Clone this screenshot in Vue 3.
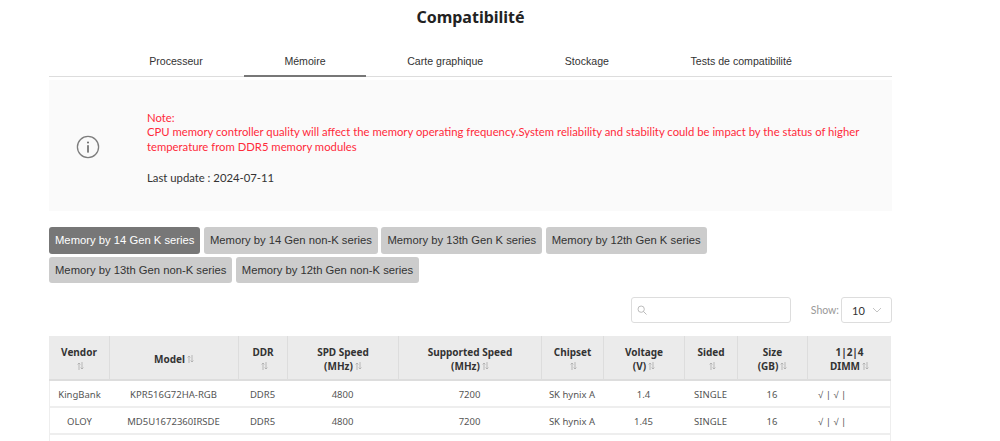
<script setup>
const TABS = ["Processeur", "Mémoire", "Carte graphique", "Stockage", "Tests de compatibilité"];

const SERIES = [
  "Memory by 14 Gen K series",
  "Memory by 14 Gen non-K series",
  "Memory by 13th Gen K series",
  "Memory by 12th Gen K series",
  "Memory by 13th Gen non-K series",
  "Memory by 12th Gen non-K series",
];

const COLUMNS = [
  { lines: ["Vendor"], width: 60, iconBelow: true },
  { lines: ["Model"], width: 129 },
  { lines: ["DDR"], width: 49, iconBelow: true },
  { lines: ["SPD Speed", "(MHz)"], width: 111 },
  { lines: ["Supported Speed", "(MHz)"], width: 143 },
  { lines: ["Chipset"], width: 62, iconBelow: true },
  { lines: ["Voltage", "(V)"], width: 81 },
  { lines: ["Sided"], width: 53, iconBelow: true },
  { lines: ["Size", "(GB)"], width: 70 },
  { lines: ["1|2|4", "DIMM"], width: 84 },
];

const ROWS = [
  ["KingBank", "KPR516G72HA-RGB", "DDR5", "4800", "7200", "SK hynix A", "1.4", "SINGLE", "16", "√ | √ |"],
  ["OLOY", "MD5U1672360IRSDE", "DDR5", "4800", "7200", "SK hynix A", "1.45", "SINGLE", "16", "√ | √ |"],
  ["", "", "", "", "", "", "", "", "", ""],
];
</script>

<template>
  <div class="page">
    <h1 class="title">Compatibilité</h1>

    <nav class="tabs">
      <a v-for="tab in TABS" :key="tab" class="tab" :class="{ active: tab === 'Mémoire' }">{{ tab }}</a>
    </nav>

    <section class="note">
      <div class="note-icon">
        <svg width="24" height="24" viewBox="0 0 24 24" fill="none">
          <circle cx="12" cy="12" r="10.6" stroke="#7d7d7d" stroke-width="1.3" />
          <circle cx="12" cy="7.6" r="1" fill="#666" />
          <rect x="11.2" y="10.2" width="1.6" height="7.4" fill="#666" />
        </svg>
      </div>
      <div class="note-text">
        <p class="warn">Note:<br />CPU memory controller quality will affect the memory operating frequency.System reliability and stability could be impact by the status of higher temperature from DDR5 memory modules</p>
        <p class="updated">Last update : 2024-07-11</p>
      </div>
    </section>

    <div class="series">
      <button
        v-for="(item, i) in SERIES"
        :key="item"
        type="button"
        class="series-btn"
        :class="{ active: i === 0 }"
      >
        {{ item }}
      </button>
    </div>

    <div class="controls">
      <div class="search">
        <svg width="10" height="10" viewBox="0 0 12 12" fill="none" stroke="#b5b5b5" stroke-width="1.1">
          <circle cx="5" cy="5" r="3.8" />
          <path d="M7.7 7.7L11.4 11.4" />
        </svg>
      </div>
      <span class="show-label">Show:</span>
      <div class="show-select">
        <span>10</span>
        <svg width="10" height="6" viewBox="0 0 10 6" fill="none" stroke="#c4c4c4" stroke-width="1">
          <path d="M1 1l4 4 4-4" />
        </svg>
      </div>
    </div>

    <table class="grid">
      <colgroup>
        <col v-for="col in COLUMNS" :key="col.lines[0]" :style="{ width: col.width + 'px' }" />
      </colgroup>
      <thead>
        <tr>
          <th v-for="col in COLUMNS" :key="col.lines[0]">
            <template v-for="(line, i) in col.lines" :key="line">
              <br v-if="i > 0" />{{ line }}
            </template>
            <br v-if="col.iconBelow" />
            <svg class="sort" width="7" height="8" viewBox="0 0 7 8" fill="none" stroke="#aaa" stroke-width="0.8">
              <path d="M2 8V1M0.6 2.4L2 1l1.4 1.4M5 0v7M3.6 5.6L5 7l1.4-1.4" />
            </svg>
          </th>
        </tr>
      </thead>
      <tbody>
        <tr v-for="(row, r) in ROWS" :key="r">
          <td v-for="(cell, c) in row" :key="c" :class="{ dimm: c === 9 }">{{ cell }}</td>
        </tr>
      </tbody>
    </table>
  </div>
</template>

<style>
body {
  background: #fff;
}
</style>

<style scoped>
.page {
  width: 843px;
  margin-left: 49px;
  font-family: Lato, "Noto Sans", sans-serif;
  font-size: 12px;
  color: #333;
}

.title {
  margin: 0;
  padding-top: 5px;
  height: 44px;
  box-sizing: border-box;
  font-family: "Noto Sans", sans-serif;
  font-size: 16px;
  line-height: 24px;
  font-weight: 700;
  text-align: center;
  color: #222;
}

.tabs {
  display: flex;
  justify-content: center;
  height: 33px;
  box-sizing: border-box;
  border-bottom: 1px solid #ddd;
  font-family: "Liberation Sans", Arial, sans-serif;
  font-size: 10.6px;
}

.tab {
  padding: 11px 40.8px 0;
  height: 33px;
  box-sizing: border-box;
  color: #333;
  white-space: nowrap;
}

.tab.active {
  border-bottom: 2px solid #777;
}

.note {
  display: flex;
  align-items: center;
  height: 131px;
  margin-top: 3px;
  background: #fafafa;
}

.note-icon {
  display: flex;
  justify-content: center;
  width: 98px;
  flex: none;
  padding: 3px 20px 0 0;
  box-sizing: border-box;
}

.note-text {
  width: 720px;
  padding-top: 5px;
  font-size: 11.3px;
  line-height: 14.6px;
}

.note-text p {
  margin: 0;
}

.warn {
  color: #ff2a3a;
}

.updated {
  margin-top: 16px !important;
  color: #333;
}

.series {
  display: flex;
  flex-wrap: wrap;
  gap: 3px 3.5px;
  width: 680px;
  margin-top: 16px;
}

.series-btn {
  height: 26.5px;
  padding: 0 6px;
  border: 0;
  border-radius: 3px;
  background: #ccc;
  color: #333;
  font-family: "Liberation Sans", Arial, sans-serif;
  font-size: 11.25px;
  white-space: nowrap;
}

.series-btn.active {
  background: #777;
  color: #fff;
}

.controls {
  display: flex;
  align-items: center;
  justify-content: flex-end;
  margin-top: 14px;
}

.search {
  display: flex;
  align-items: center;
  width: 160px;
  height: 26px;
  padding-left: 5px;
  box-sizing: border-box;
  border: 1px solid #ddd;
  border-radius: 3px;
  background: #fff;
}

.show-label {
  margin-left: 20px;
  margin-right: 2px;
  color: #999;
  font-size: 10.5px;
}

.show-select {
  display: flex;
  align-items: center;
  justify-content: space-between;
  width: 51px;
  height: 26px;
  padding: 0 9px 0 10px;
  box-sizing: border-box;
  border: 1px solid #ddd;
  border-radius: 3px;
  font-size: 11px;
  color: #333;
}

.grid {
  width: 842px;
  margin-top: 13px;
  table-layout: fixed;
  border-collapse: separate;
  border-spacing: 0;
  font-family: "Noto Sans", sans-serif;
  font-size: 9.5px;
}

th {
  height: 45px;
  padding: 2px 2px 0;
  box-sizing: border-box;
  border-left: 1px solid #ddd;
  border-bottom: 2px solid #ddd;
  background: #ebebeb;
  color: #333;
  font-size: 10px;
  line-height: 14px;
  font-weight: 700;
  text-align: center;
}

th:first-child {
  border-left: 0;
}

.sort {
  margin-left: 2px;
}

td {
  height: 27px;
  padding: 1px 2px 0;
  box-sizing: border-box;
  border-bottom: 2px solid #eee;
  color: #555;
  text-align: center;
  white-space: nowrap;
}

td:first-child {
  border-left: 1px solid #eee;
}

td:last-child {
  border-right: 1px solid #eee;
}

td.dimm {
  padding-left: 11px;
  text-align: left;
}
</style>
